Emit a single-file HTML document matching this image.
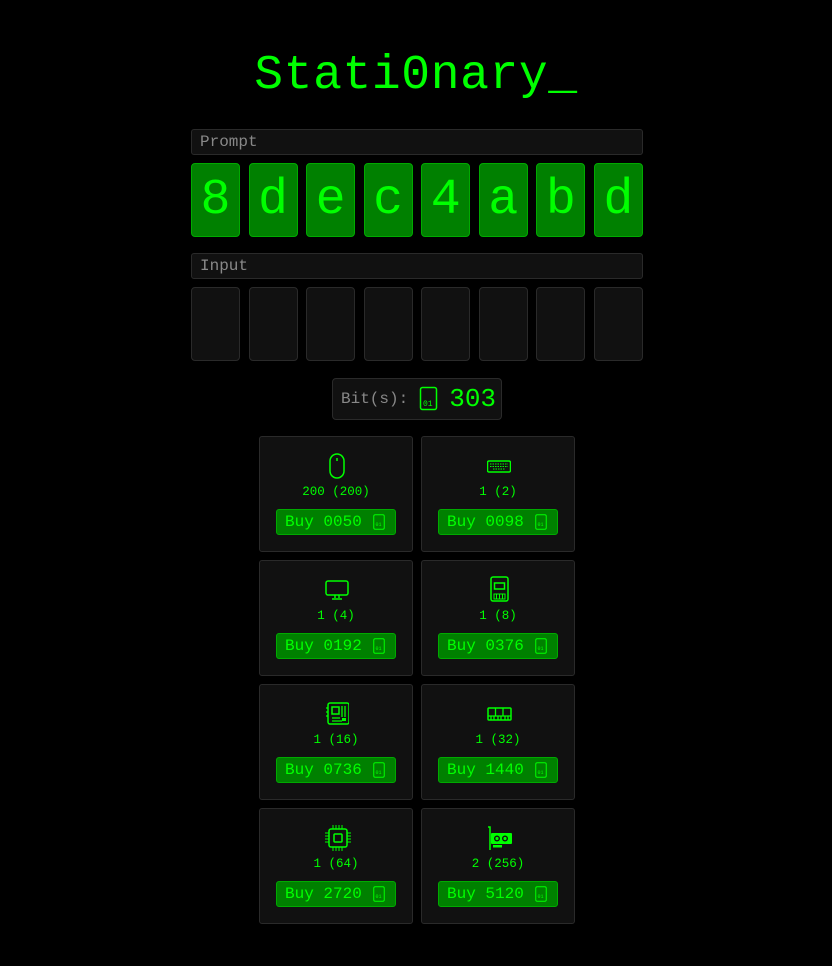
<!DOCTYPE html>
<html><head><meta charset="utf-8"><style>
*{box-sizing:border-box;margin:0;padding:0}
body{background:#000;width:832px;height:966px;font-family:"Liberation Mono",monospace;color:#00ff00;position:relative;overflow:hidden}
.title{position:absolute;top:44px;left:0;width:832px;text-align:center;font-size:48px;letter-spacing:0.6px;line-height:64px}
.bar{position:absolute;left:191px;width:452px;height:26px;background:#111;border:1px solid #2a2a2a;border-radius:3px;color:#888;font-size:16px;line-height:24px;padding-left:8px}
.row{position:absolute;left:191px;width:452px;height:74px;display:flex;justify-content:space-between}
.t{width:49px;height:74px;border-radius:4px;display:flex;align-items:center;justify-content:center;font-size:50px}
.g .t{background:#008000;border:1px solid #0a0;color:#00ff00}
.e .t{background:#111;border:1px solid #2a2a2a}
.bits{position:absolute;left:332px;top:378px;width:170px;height:42px;background:#111;border:1px solid #2a2a2a;border-radius:4px;display:flex;align-items:center;padding-left:8px}
.bits .l{color:#888;font-size:16px}
.bits .n{font-size:26px;margin-left:10px}
.card{position:absolute;width:154px;height:116px;background:#111;border:1px solid #2a2a2a;border-radius:3px}
.card svg.ic{position:absolute;left:65px;top:15px}
.card .c{position:absolute;top:48px;width:100%;text-align:center;font-size:12.5px}
.card .b{position:absolute;left:16px;top:72px;width:120px;height:26px;background:#008000;border:1px solid #0a0;border-radius:3px;font-size:16px;line-height:25px;padding-left:8px}
.card .b svg{position:absolute;right:10px;top:4px}
</style></head><body>
<div class="title">Stati0nary_</div>
<div class="bar" style="top:129px">Prompt</div>
<div class="row g" style="top:163px"><div class="t">8</div><div class="t">d</div><div class="t">e</div><div class="t">c</div><div class="t">4</div><div class="t">a</div><div class="t">b</div><div class="t">d</div></div>
<div class="bar" style="top:253px">Input</div>
<div class="row e" style="top:287px"><div class="t"></div><div class="t"></div><div class="t"></div><div class="t"></div><div class="t"></div><div class="t"></div><div class="t"></div><div class="t"></div></div>
<div class="bits"><span class="l">Bit(s):</span>
<svg width="20" height="26" viewBox="0 0 20 26" style="margin-left:11px"><rect x="1.5" y="1.5" width="16" height="22" rx="2" fill="none" stroke="#0f0" stroke-width="1.5"/><text x="4" y="20" font-size="8" fill="#0f0" font-family="Liberation Mono">01</text></svg>
<span class="n">303</span></div>

<div class="card" style="left:259px;top:436px"><svg class="ic" width="24" height="28" viewBox="0 0 24 28"><rect x="5" y="2" width="14" height="24" rx="7" fill="none" stroke="#0f0" stroke-width="1.5"/><line x1="12" y1="6" x2="12" y2="9" stroke="#0f0" stroke-width="1.5"/></svg><div class="c">200 (200)</div><div class="b">Buy 0050<svg width="12" height="16"><rect x=".75" y=".75" width="10.5" height="14.5" rx="1.5" fill="none" stroke="#0f0"/><text x="2.5" y="12" font-size="5" fill="#0f0">01</text></svg></div></div>
<div class="card" style="left:421px;top:436px"><svg class="ic" width="24" height="28" viewBox="0 0 24 28"><rect x="0.5" y="9" width="23" height="11" rx="1.5" fill="none" stroke="#0f0" stroke-width="1.5"/><path d="M3 12h18M3 14.5h18M6 17h12" stroke="#0f0" stroke-width="1" stroke-dasharray="1.5 1"/></svg><div class="c">1 (2)</div><div class="b">Buy 0098<svg width="12" height="16"><rect x=".75" y=".75" width="10.5" height="14.5" rx="1.5" fill="none" stroke="#0f0"/><text x="2.5" y="12" font-size="5" fill="#0f0">01</text></svg></div></div>

<div class="card" style="left:259px;top:560px"><svg class="ic" width="24" height="28" viewBox="0 0 24 28"><rect x="1" y="5" width="22" height="14" rx="2" fill="none" stroke="#0f0" stroke-width="1.5"/><path d="M10 19v3M14 19v3M7 23h10" stroke="#0f0" stroke-width="1.5"/></svg><div class="c">1 (4)</div><div class="b">Buy 0192<svg width="12" height="16"><rect x=".75" y=".75" width="10.5" height="14.5" rx="1.5" fill="none" stroke="#0f0"/><text x="2.5" y="12" font-size="5" fill="#0f0">01</text></svg></div></div>
<div class="card" style="left:421px;top:560px"><svg class="ic" width="24" height="28" viewBox="0 0 24 28"><rect x="4" y="1" width="17" height="24" rx="2" fill="none" stroke="#0f0" stroke-width="1.5"/><rect x="7.5" y="7" width="10" height="6" fill="none" stroke="#0f0" stroke-width="1.5"/><path d="M7 18h11v5H7z" fill="none" stroke="#0f0" stroke-width="1"/><path d="M9.5 18v5M12.5 18v5M15.5 18v5" stroke="#0f0" stroke-width="1"/></svg><div class="c">1 (8)</div><div class="b">Buy 0376<svg width="12" height="16"><rect x=".75" y=".75" width="10.5" height="14.5" rx="1.5" fill="none" stroke="#0f0"/><text x="2.5" y="12" font-size="5" fill="#0f0">01</text></svg></div></div>

<div class="card" style="left:259px;top:684px"><svg class="ic" width="24" height="28" viewBox="0 0 24 28"><rect x="3" y="3" width="21" height="21" rx="2" fill="none" stroke="#0f0" stroke-width="1.5"/><rect x="7" y="7" width="7" height="7" fill="none" stroke="#0f0" stroke-width="1.5"/><path d="M17 6v11M20 6v11M7 18h8M7 21h10M1 8h2M1 12h2M1 16h2" stroke="#0f0" stroke-width="1.3"/><rect x="17" y="18" width="4" height="3" fill="#0f0"/></svg><div class="c">1 (16)</div><div class="b">Buy 0736<svg width="12" height="16"><rect x=".75" y=".75" width="10.5" height="14.5" rx="1.5" fill="none" stroke="#0f0"/><text x="2.5" y="12" font-size="5" fill="#0f0">01</text></svg></div></div>
<div class="card" style="left:421px;top:684px"><svg class="ic" width="26" height="28" viewBox="0 0 26 28"><rect x="1" y="8" width="23" height="12" rx="1" fill="none" stroke="#0f0" stroke-width="1.5"/><path d="M8.5 8v8M16 8v8M1 16h23M4 16v4M7 16v4M11 16v4M14 16v4M18 16v4M21 16v4" stroke="#0f0" stroke-width="1.3"/></svg><div class="c">1 (32)</div><div class="b">Buy 1440<svg width="12" height="16"><rect x=".75" y=".75" width="10.5" height="14.5" rx="1.5" fill="none" stroke="#0f0"/><text x="2.5" y="12" font-size="5" fill="#0f0">01</text></svg></div></div>

<div class="card" style="left:259px;top:808px"><svg class="ic" width="26" height="28" viewBox="0 0 26 28"><rect x="4" y="5" width="18" height="18" rx="2" fill="none" stroke="#0f0" stroke-width="1.5"/><rect x="9" y="10" width="8" height="8" rx="1" fill="none" stroke="#0f0" stroke-width="1.5"/><path d="M8 1v4M11 1v4M14 1v4M17 1v4M8 23v4M11 23v4M14 23v4M17 23v4M0 9h4M0 12h4M0 15h4M0 18h4M22 9h4M22 12h4M22 15h4M22 18h4" stroke="#0f0" stroke-width="1"/></svg><div class="c">1 (64)</div><div class="b">Buy 2720<svg width="12" height="16"><rect x=".75" y=".75" width="10.5" height="14.5" rx="1.5" fill="none" stroke="#0f0"/><text x="2.5" y="12" font-size="5" fill="#0f0">01</text></svg></div></div>
<div class="card" style="left:421px;top:808px"><svg class="ic" width="26" height="28" viewBox="0 0 26 28"><path d="M1 3h2v23" fill="none" stroke="#0f0" stroke-width="1.5"/><rect x="4" y="9" width="21" height="11" rx="1" fill="#0f0"/><circle cx="10" cy="14.5" r="3" fill="#111"/><circle cx="18" cy="14.5" r="3" fill="#111"/><circle cx="10" cy="14.5" r="1.6" fill="#0f0"/><circle cx="18" cy="14.5" r="1.6" fill="#0f0"/><rect x="6" y="21" width="9" height="2.5" fill="#0f0"/></svg><div class="c">2 (256)</div><div class="b">Buy 5120<svg width="12" height="16"><rect x=".75" y=".75" width="10.5" height="14.5" rx="1.5" fill="none" stroke="#0f0"/><text x="2.5" y="12" font-size="5" fill="#0f0">01</text></svg></div></div>
</body></html>
